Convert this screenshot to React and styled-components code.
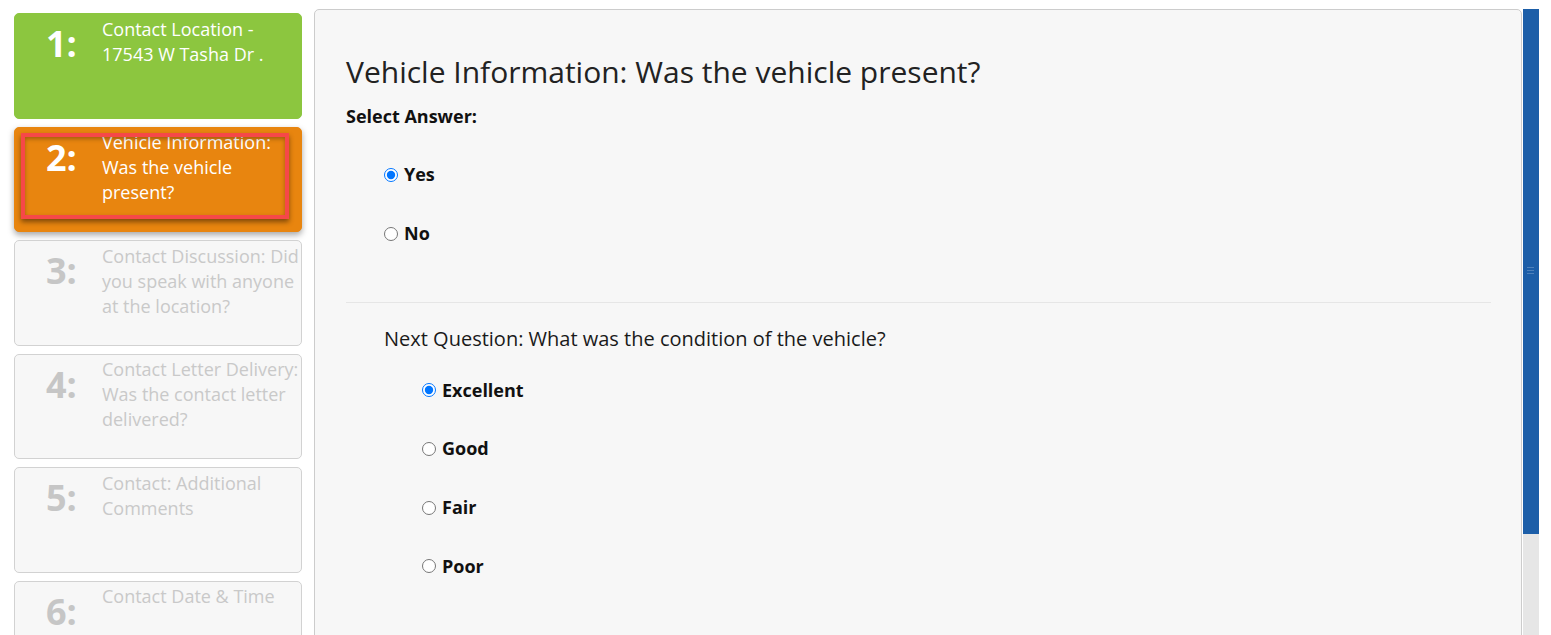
import React from 'react';
import styled, { createGlobalStyle } from 'styled-components';

const steps = [
    { n: 1, lines: ["Contact Location -", "17543 W Tasha Dr ."], state: "done" },
    { n: 2, lines: ["Vehicle Information:", "Was the vehicle", "present?"], state: "active" },
    { n: 3, lines: ["Contact Discussion: Did", "you speak with anyone", "at the location?"], state: "todo" },
    { n: 4, lines: ["Contact Letter Delivery:", "Was the contact letter", "delivered?"], state: "todo" },
    { n: 5, lines: ["Contact: Additional", "Comments"], state: "todo" },
    { n: 6, lines: ["Contact Date & Time"], state: "todo" },
];

const conditions = ["Excellent", "Good", "Fair", "Poor"];

const cardColors = {
    done: { bg: "#8cc63f", border: "#8cc63f", text: "#ffffff", num: "#ffffff" },
    active: { bg: "#e8850f", border: "#e8850f", text: "#ffffff", num: "#ffffff" },
    todo: { bg: "#f7f7f7", border: "#d2d2d2", text: "#c9c9c9", num: "#c6c6c6" },
};

export default function App()
{
    return (
        <Page>
            <GlobalStyle />
            <Sidebar>
                {steps.map((step) =>
                    <StepCard key={step.n} $state={step.state}>
                        <StepNumber $state={step.state}>{step.n}:</StepNumber>
                        <StepText $state={step.state}>
                            {step.lines.map((l, i) => <StepLine key={i}>{l}</StepLine>)}
                        </StepText>
                        {step.state === "active" && <Highlight />}
                    </StepCard>
                )}
            </Sidebar>

            <Panel>
                <Title>Vehicle Information: Was the vehicle present?</Title>
                <SubLabel>Select Answer:</SubLabel>
                <Options $top={33.5} $gap={34}>
                    <Option>
                        <Radio type="radio" name="present" defaultChecked />
                        <span>Yes</span>
                    </Option>
                    <Option>
                        <Radio type="radio" name="present" />
                        <span>No</span>
                    </Option>
                </Options>

                <Divider $top={55.5} />

                <NextSection>
                    <Question>Next Question: What was the condition of the vehicle?</Question>
                    <Options $top={26.2} $gap={33.7}>
                        {conditions.map((c, i) =>
                            <Option key={c}>
                                <Radio type="radio" name="condition" defaultChecked={i === 0} />
                                <span>{c}</span>
                            </Option>
                        )}
                    </Options>
                    <Divider $top={56} />
                </NextSection>
            </Panel>

            <Scrollbar>
                <Thumb>
                    <Grip />
                </Thumb>
            </Scrollbar>
        </Page>
    );
}

const GlobalStyle = createGlobalStyle`
    html, body {
        margin: 0;
        padding: 0;
        background: #ffffff;
        overflow: hidden;
    }
    body {
        font-family: "Open Sans", "Liberation Sans", sans-serif;
    }
`

const Page = styled.div`
    display: flex;
    align-items: flex-start;
    height: 635px;
    overflow: hidden;
    padding: 9px 12px 0 14px;
    box-sizing: border-box;
`

const Sidebar = styled.div`
    width: 288px;
    flex-shrink: 0;
    display: flex;
    flex-direction: column;
    gap: 8px;
    padding-top: 4px;
    margin-right: 12px;
`

const StepCard = styled.div`
    position: relative;
    display: flex;
    height: 105.5px;
    flex-shrink: 0;
    box-sizing: border-box;
    border-radius: 5px;
    border: 1px solid ${(p) => cardColors[p.$state].border};
    background: ${(p) => cardColors[p.$state].bg};
    box-shadow: ${(p) => p.$state === "active" ? "0 3px 6px rgba(0, 0, 0, 0.35)" : "none"};
`

const StepNumber = styled.div`
    width: 87px;
    flex-shrink: 0;
    box-sizing: border-box;
    padding: 12px 0 0 31px;
    font-size: 36px;
    font-weight: 700;
    line-height: 36px;
    color: ${(p) => cardColors[p.$state].num};
`

const StepText = styled.div`
    padding-top: 2.5px;
    font-size: 18px;
    line-height: 25px;
    color: ${(p) => cardColors[p.$state].text};
    white-space: nowrap;
`

const StepLine = styled.div``

const Highlight = styled.div`
    position: absolute;
    left: 6px;
    top: 5px;
    width: 268px;
    height: 86px;
    box-sizing: border-box;
    border: 4px solid #f64848;
    box-shadow: 0 3px 5px rgba(0, 0, 0, 0.45), inset 0 2px 4px rgba(0, 0, 0, 0.3);
    pointer-events: none;
`

const Panel = styled.div`
    flex: 1;
    height: 700px;
    box-sizing: border-box;
    background: #f7f7f7;
    border: 1px solid #cccccc;
    border-radius: 5px 5px 0 0;
    padding: 43.7px 30px 0 31px;
    color: #1a1a1a;
`

const Title = styled.h2`
    margin: 0;
    font-size: 30px;
    font-weight: 400;
    line-height: 36px;
    color: #222222;
`

const SubLabel = styled.div`
    margin-top: 14.1px;
    font-size: 18px;
    font-weight: 700;
    line-height: 25px;
    color: #111111;
`

const Options = styled.div`
    display: flex;
    flex-direction: column;
    gap: ${(p) => p.$gap}px;
    margin-top: ${(p) => p.$top}px;
    padding-left: 38px;
`

const Option = styled.label`
    display: flex;
    align-items: center;
    gap: 6px;
    height: 25px;
    font-size: 18px;
    font-weight: 700;
    line-height: 25px;
    color: #111111;
`

const Radio = styled.input`
    width: 14px;
    height: 14px;
    margin: 0;
    flex-shrink: 0;
`

const Divider = styled.div`
    margin-top: ${(p) => p.$top}px;
    height: 1px;
    background: #e6e6e6;
`

const NextSection = styled.div`
    padding-left: 38px;
    padding-top: 23.7px;
`

const Question = styled.div`
    font-size: 20px;
    line-height: 25px;
    color: #1a1a1a;
`

const Scrollbar = styled.div`
    width: 16px;
    flex-shrink: 0;
    height: 640px;
    background: #e6e6e6;
    margin-left: 1px;
`

const Thumb = styled.div`
    position: relative;
    height: 525px;
    background: #1c5ea8;
`

const Grip = styled.div`
    position: absolute;
    left: 4px;
    top: 258px;
    width: 7px;
    height: 7px;
    background: repeating-linear-gradient(
        to bottom,
        rgba(255, 255, 255, 0.22) 0 1px,
        transparent 1px 3px
    );
`
